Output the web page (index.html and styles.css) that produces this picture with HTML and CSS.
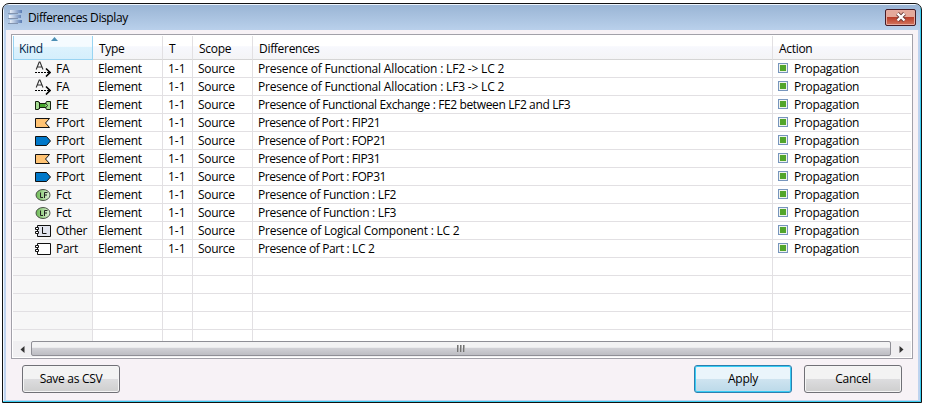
FILE: index.html
```html
<!DOCTYPE html>
<html lang="en">
<head>
<meta charset="utf-8">
<title>Differences Display</title>
<link rel="stylesheet" href="styles.css">
</head>
<body>
<svg class="defs" width="0" height="0">
  <defs>
    <linearGradient id="green"><stop offset="0" stop-color="#69b94f"/><stop offset="1" stop-color="#e2f3dc"/></linearGradient>
    <linearGradient id="bar"><stop offset="0" stop-color="#f2f7fd"/><stop offset="1" stop-color="#5b7db4"/></linearGradient>
    <symbol id="i-fa" viewBox="0 0 16 16"><path d="M1.200 8.500 4.200 1h.8l3 7.500M2.500 6h4.500" fill="none" stroke="#333" stroke-width="1.100"/><path d="M0 11.500h14" stroke="#000" stroke-dasharray="2 1"/><path d="M11 7.500l4 4-4 4" fill="none" stroke="#000" stroke-width="1.600"/></symbol>
    <symbol id="i-fe" viewBox="0 0 16 16"><path d="M.5 4.500h3l1 2h6l1-2h4v8h-4l-1-2h-6l-1 2h-3z" fill="#a5dd91" stroke="#14220f"/><path d="M5 6.500h5.500v4H5z" fill="#45a52c"/><path d="M4.500 5v7M4 6.500h7M4 10.500h7M10.500 6l2 2.500-2 2.500" fill="none" stroke="#14220f"/></symbol>
    <symbol id="i-in" viewBox="0 0 16 16"><path d="M.5 3.500h14l-4 4.500 4 4.500h-14z" fill="#ffc373" stroke="#111"/></symbol>
    <symbol id="i-out" viewBox="0 0 16 16"><path d="M.5 3.500h11l4 4.500-4 4.500h-11z" fill="#0078c9" stroke="#111"/></symbol>
    <symbol id="i-fct" viewBox="0 0 16 16"><ellipse cx="8" cy="8" rx="7" ry="5.500" fill="url(#green)" stroke="#4c5549"/><path d="M5.500 5.500v5h2.500M9.500 11V5.500h3M9.500 8h2.500" fill="none" stroke="#222"/></symbol>
    <symbol id="i-lc" viewBox="0 0 16 16"><path d="M2.500 2.500h13v11h-13z" fill="#e2e5ef" stroke="#111"/><path d="M7.500 4v6.500h4" fill="none" stroke="#111"/><path d="M.5 4.500h3v2h-3zM.5 8.500h3v2h-3z" fill="#fff" stroke="#111"/></symbol>
    <symbol id="i-part" viewBox="0 0 16 16"><path d="M2.500 2.500h13v11h-13z" fill="#fff" stroke="#111"/><path d="M.5 4.500h3v2h-3zM.5 8.500h3v2h-3z" fill="#fff" stroke="#111"/></symbol>
  </defs>
</svg>
<main class="window">
  <header class="titlebar">
    <svg class="logo" width="15" height="15" viewBox="0 0 15 15"><path d="M2 1h12v3H2zM1 6h12v3H1zM2 11h12v3H2z" fill="url(#bar)"/><path d="M0 4.500h10M0 9.500h10M0 14.500h10" stroke="#8293ae"/></svg>
    <h1>Differences Display</h1>
    <button class="close" aria-label="Close"><svg width="12" height="10" viewBox="0 0 12 10"><path d="M2.500 1.500l7 7M9.500 1.500l-7 7" stroke="#6b3a38" stroke-width="4"/><path d="M2.500 1.500l7 7M9.500 1.500l-7 7" stroke="#fff" stroke-width="2.400"/></svg></button>
  </header>
  <section class="content">
    <div class="table">
      <div class="row head"><div class="sorted">Kind<svg class="sort" width="7" height="4"><path d="M0 4 3.500 0 7 4z" fill="#4c8fb5"/></svg></div><div>Type</div><div>T</div><div>Scope</div><div>Differences</div><div>Action</div></div>
      <div class="rows" id="rows"></div>
      <div class="scroll"><span class="arrow"><svg width="5" height="7"><path d="M4.500 0v7L.5 3.500z" fill="#333"/></svg></span><div class="thumb"><i></i><i></i><i></i></div><span class="arrow right"><svg width="5" height="7"><path d="M.5 0v7l4-3.500z" fill="#333"/></svg></span></div>
    </div>
    <footer><button class="btn save">Save as CSV</button><button class="btn apply">Apply</button><button class="btn">Cancel</button></footer>
  </section>
</main>
<script src="rows.js"></script>
</body>
</html>
```
FILE: styles.css
```css
* { box-sizing: border-box; }
body { margin: 0; width: 926px; height: 405px; overflow: hidden; background: #fff; font: 12px/17px "Open Sans", sans-serif; letter-spacing: -0.3px; color: #000; }
.defs { position: absolute; }
.window { width: 920px; height: 400px; margin: 3px 0 0 2px; border: 1px solid #111; border-radius: 7px 7px 0 0; background: #bfd3ef; box-shadow: inset -1px -1px #3bcdf0, inset 1px 1px #eef6ff; padding: 1px 3px 3px; overflow: hidden; }
.titlebar { height: 25px; margin: 0 -2px; display: flex; align-items: center; background: linear-gradient(#9ab5d5, #b9d0eb); padding: 0 5px 0 4px; }
.logo { margin: 0 5px 2px 0; }
h1 { font: inherit; letter-spacing: -0.4px; margin: 0; flex: 1; }
.close { width: 31px; height: 17px; margin: 0 -1px 1px 0; padding: 0; border: 1px solid #461c26; border-radius: 2px; background: linear-gradient(#e4a99b 0 45%, #b93e2a 50%, #d3765f); box-shadow: inset 0 0 0 1px #e5aaa0; display: grid; place-items: center; }
.content { height: 370px; background: #f7f2f6; padding: 4px 5px 0 5px; }
.table { height: 325px; border: 1px solid #a2a1a9; background: #fff; padding: 1px; }
.row { display: grid; grid-template-columns: 80px 70px 30px 60px 520px 1fr; height: 18px; }
.row > div { border-right: 1px solid #e2e0e3; border-bottom: 1px solid #e2e0e3; padding-left: 5px; white-space: nowrap; display: flex; align-items: center; height: 18px; overflow: hidden; }
.row > div:last-child { border-right: 0; }
.row > div:first-child { padding-left: 22px; background: #f7f7f7; }
.row svg { flex: none; width: 16px; height: 16px; margin-right: 5px; }
.row.head { height: 24px; background: linear-gradient(#fff 0 40%, #f7f8fd 45%, #f4f4f6); }
.row.head > div { height: 24px; padding-left: 6px; border-bottom-color: #d5d5d5; padding-top: 1px; }
.row.head .sorted { position: relative; padding-left: 5px; background: linear-gradient(#f5fbff 0 45%, #dcf2fd 50%, #d5effc); border: 1px solid #99d4f2; border-top: 0; color: #001d48; }
.row.head .sort { position: absolute; left: 37px; top: 1px; width: 7px; height: 4px; margin: 0; }
.rows { height: 281px; overflow: hidden; }
.t { letter-spacing: 0; }
.wide { letter-spacing: -0.18px; }
.medium { letter-spacing: -0.23px; }
.tight { letter-spacing: -0.37px; }
.port { letter-spacing: -0.42px; }
.row .check { width: 10px; height: 10px; border: 1px solid #7795bd; background: #51a52b; box-shadow: inset 0 0 0 1px #eef3ed; margin: 0 6px 2px 0; flex: none; }
.scroll { height: 16px; display: flex; background: #f0eff1; }
.arrow { width: 18px; display: grid; place-items: center; }
.arrow.right { width: 20px; }
.thumb { flex: 1; height: 15px; border: 1px solid #8f8f96; border-radius: 2px; background: linear-gradient(#f3f3f4 0 40%, #d0d0d5 50%, #bdbdc3); display: flex; gap: 1px; justify-content: center; align-items: center; }
.thumb i { width: 2px; height: 7px; background: linear-gradient(90deg, #555, #ccc); }
footer { display: flex; gap: 12px; padding: 6px 11px 0 11px; }
.btn { width: 98px; height: 28px; padding: 0 0 1px; border: 1px solid #707076; border-radius: 3px; background: linear-gradient(#f3f3f3 0 48%, #dddddf 50%, #cecece); box-shadow: inset 0 0 0 1px #f5f5f5; font: inherit; letter-spacing: inherit; color: #000; }
.save { margin-right: auto; }
.apply { border-color: #2d7fae; background: linear-gradient(#eaf5fb 0 48%, #cfe4f0 50%, #bbd9e9); box-shadow: inset 0 0 0 1px #37cdf5; }
```
FILE: rows.js
```js
const items = [
  ["fa", "FA", "Functional Allocation : LF2 -> LC 2", "wide"],
  ["fa", "FA", "Functional Allocation : LF3 -> LC 2", "wide"],
  ["fe", "FE", "Functional Exchange : FE2 between LF2 and LF3", "tight"],
  ["in", "FPort", "Port : FIP21", "port"],
  ["out", "FPort", "Port : FOP21", "port"],
  ["in", "FPort", "Port : FIP31", "port"],
  ["out", "FPort", "Port : FOP31", "port"],
  ["fct", "Fct", "Function : LF2", ""],
  ["fct", "Fct", "Function : LF3", ""],
  ["lc", "Other", "Logical Component : LC 2", "medium"],
  ["part", "Part", "Part : LC 2", "tight"]
];
const filled = items.map(([icon, kind, what, fit]) =>
  `<div class="row"><div><svg><use href="#i-${icon}"/></svg>${kind}</div><div>Element</div><div class="t">1-1</div><div>Source</div><div class="${fit}">Presence of ${what.replace(">", "&gt;")}</div><div><i class="check"></i>Propagation</div></div>`);
const empty = `<div class="row">${"<div></div>".repeat(6)}</div>`;
document.getElementById("rows").innerHTML = filled.join("") + empty.repeat(5);
```
